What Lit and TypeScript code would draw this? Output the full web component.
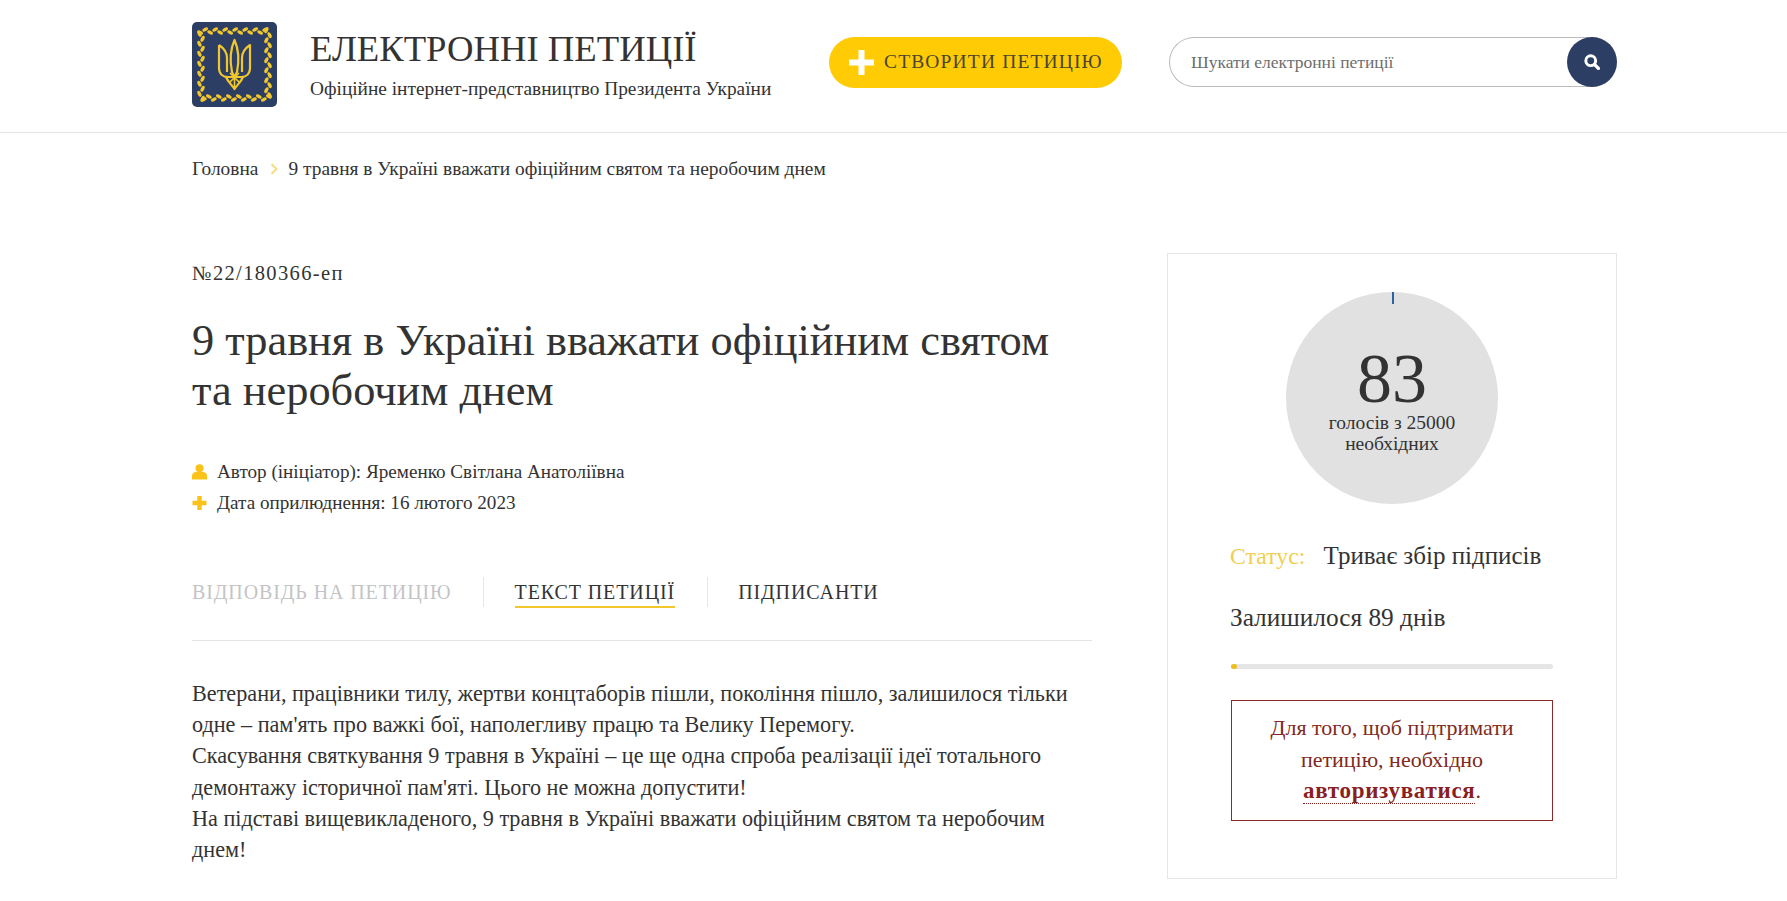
import { LitElement, html, css, svg } from 'lit'
import { customElement } from 'lit/decorators.js'

const GOLD = '#f2c72d'

// leaves of the wreath round the logo, one run per side
function wreath () {
  const leaves = []
  const a = 9
  const b = 76
  const step = 5
  for (let p = a; p < b; p += step) {
    const odd = Math.round((p - a) / step) % 2 === 0 ? 1 : -1
    const sides = [
      [p, a, 0],
      [b, p, 90],
      [b - (p - a), b, 180],
      [a, b - (p - a), 270]
    ]
    for (const [x, y, r] of sides) {
      leaves.push(svg`<ellipse cx="0" cy="${odd * 1.8}" rx="3.200" ry="1.700" fill="${GOLD}" transform="translate(${x} ${y}) rotate(${r + odd * 28})"/>`)
    }
  }
  return leaves
}

const trident = svg`<g fill="none" stroke="${GOLD}" stroke-width="2.200" stroke-linejoin="round">
  <path d="M42.500 18 C38 28 38 40 40 50 L42.500 55 L45 50 C47 40 47 28 42.500 18 Z"/>
  <path d="M27 23 L27 46 C27 52 31 55 36 55 L49 55 C54 55 58 52 58 46 L58 23 C52 27 50 31 50 36 L50 50"/>
  <path d="M27 23 C33 27 35 31 35 36 L35 50"/>
  <path d="M34 55 C36 60 40 63 42.500 67 C45 63 49 60 51 55"/>
  <path d="M42.500 55 L42.500 67 M38 51 L47 60 M47 51 L38 60" stroke-width="1.600"/>
</g>`

@customElement('app-root')
export class AppRoot extends LitElement {
  static styles = css`
    :host {
      display: block;
      height: 901px;
      overflow: hidden;
      background: #fff;
      color: #333;
      font-family: "Liberation Serif", serif;
      font-size: 19.5px;
    }
    a { color: inherit; text-decoration: none; }
    .wrap { width: 1425px; margin-left: 192px; }
    header { height: 132px; border-bottom: 1px solid #e4e4e4; }
    .top { display: flex; align-items: flex-start; height: 100%; }
    .logo { width: 85px; height: 85px; margin-top: 22px; flex: none; display: block; }
    .brand { width: 552px; padding: 26px 0 0 33px; box-sizing: border-box; flex: none; }
    .brand h2 { margin: 0; font-size: 36.7px; font-weight: 400; line-height: 46px; color: #333; white-space: nowrap; }
    .brand p { margin: 5px 0 0; font-size: 19.35px; line-height: 24px; white-space: nowrap; }
    .create {
      display: flex; align-items: center; gap: 10px;
      width: 293px; height: 51px; margin-top: 37px; padding: 0 0 1px 20px; box-sizing: border-box;
      background: #ffcb05; border-radius: 26px; flex: none;
      font-size: 19.5px; letter-spacing: 1.15px; color: #4a4431; white-space: nowrap;
    }
    .search {
      display: flex; align-items: center; justify-content: space-between;
      width: 448px; height: 50px; margin: 37px 0 0 47px; box-sizing: border-box;
      border: 1px solid #bbb; border-radius: 25px; border-right: 0; padding-left: 21px;
      font-size: 17.5px; color: #6d6d6d;
    }
    .search b {
      width: 50px; height: 50px; border-radius: 50%; background: #2c3e63;
      display: flex; align-items: center; justify-content: center; flex: none;
    }
    .crumbs { display: flex; align-items: center; height: 72px; font-size: 19.4px; white-space: nowrap; }
    .crumbs svg { margin: 0 10px 0 12px; }
    .body { display: flex; justify-content: space-between; align-items: flex-start; margin-top: 48px; }
    main { width: 900px; padding-top: 8px; }
    .num { font-size: 20.5px; line-height: 24px; letter-spacing: 1.35px; }
    h1 { margin: 30px 0 0; font-size: 44.4px; font-weight: 400; line-height: 50px; color: #333; white-space: nowrap; }
    .meta { margin-top: 41px; }
    .meta div { display: flex; align-items: center; gap: 10px; height: 31px; font-size: 19.15px; }
    .meta svg { width: 15px; height: 16px; flex: none; }
    .tabs {
      display: flex; align-items: center; margin-top: 57px; height: 34px;
      font-size: 20px; letter-spacing: 0.9px; white-space: nowrap;
    }
    .tabs > span { height: 30px; line-height: 30px; }
    .tabs .off { color: #c4c4c4; padding-right: 31px; border-right: 1px solid #e6e6e6; }
    .tabs .on { margin-left: 31px; position: relative; }
    .tabs .on::after {
      content: ""; position: absolute; left: 0; right: 0; bottom: -1px; height: 2px; background: #f2c72d;
    }
    .tabs i { width: 1px; height: 30px; background: #e6e6e6; margin: 0 30px 0 32px; }
    .text {
      margin-top: 31px; padding-top: 37px; border-top: 1px solid #e4e4e4;
      font-size: 22.2px; line-height: 31.2px; color: #333; white-space: nowrap;
    }
    .text p { margin: 0; }
    aside {
      width: 450px; height: 626px; box-sizing: border-box; border: 1px solid #e6e6e6;
      padding: 38px 63px 0;
    }
    .circle {
      position: relative;
      width: 212px; height: 212px; margin: 0 auto; border-radius: 50%; background: #e1e1e1;
      display: flex; flex-direction: column; align-items: center; padding-top: 54px; box-sizing: border-box;
      text-align: center;
    }
    .circle::before {
      content: ""; position: absolute; top: 0; left: 106px; width: 2px; height: 12px; background: #2d63a5;
    }
    .count { font-size: 70px; line-height: 66px; color: #333; }
    .of { font-size: 19.5px; line-height: 21px; width: 150px; }
    .status { margin: 37px 0 0 -1px; font-size: 25px; line-height: 30px; white-space: nowrap; color: #333; }
    .status span { color: #f0cf4f; margin-right: 12px; font-size: 23.8px; }
    .left { margin: 30px 0 0 -1px; font-size: 25.3px; line-height: 32px; color: #333; }
    .bar { height: 5px; margin-top: 31px; background: #e5e5e5; border-radius: 3px; }
    .bar div { height: 100%; background: #e9c01f; border-radius: 3px; }
    .alert {
      margin-top: 31px; height: 121px; box-sizing: border-box; border: 1px solid #8c2a2a;
      color: #7f2a20; text-align: center; font-size: 22px; line-height: 31.5px; padding-top: 11px;
    }
    .alert a { font-weight: 700; font-size: 23px; letter-spacing: 0.7px; color: #8a1f1f; border-bottom: 1px dotted #8a1f1f; }
  `

  render () {
    const percent = Math.max((83 / 25000) * 100, 2)
    return html`
      <header>
        <div class="wrap top">
          <svg class="logo" viewBox="0 0 85 85">
            <rect width="85" height="85" rx="5" fill="#2c3e63"/>
            ${wreath()}
            ${trident}
          </svg>
          <div class="brand">
            <h2>ЕЛЕКТРОННІ ПЕТИЦІЇ</h2>
            <p>Офіційне інтернет-представництво Президента України</p>
          </div>
          <a class="create">
            <svg width="25" height="25" viewBox="0 0 25 25"><path d="M12.500 0v25M0 12.500h25" stroke="#fff" stroke-width="6"/></svg>
            СТВОРИТИ ПЕТИЦІЮ
          </a>
          <div class="search">
            Шукати електронні петиції
            <b>
              <svg width="16" height="16" viewBox="0 0 15 15"><circle cx="6.300" cy="6.300" r="4.600" fill="none" stroke="#fff" stroke-width="2.800"/><path d="M10 10l3.500 3.500" stroke="#fff" stroke-width="3.200" stroke-linecap="round"/></svg>
            </b>
          </div>
        </div>
      </header>
      <div class="wrap">
        <nav class="crumbs">
          <a>Головна</a>
          <svg width="8" height="12" viewBox="0 0 8 12"><path d="M1.500 1l5 5-5 5" fill="none" stroke="#f7dc7d" stroke-width="2"/></svg>
          <span>9 травня в Україні вважати офіційним святом та неробочим днем</span>
        </nav>
        <div class="body">
          <main>
            <div class="num">№22/180366-еп</div>
            <h1>9 травня в Україні вважати офіційним святом<br>та неробочим днем</h1>
            <div class="meta">
              <div>
                <svg viewBox="0 0 15 16"><circle cx="7.500" cy="4.200" r="4" fill="#fbc31a"/><path d="M0 15.500V12c0-2.500 2-4 4-4h7c2 0 4 1.500 4 4v3.500z" fill="#fbc31a"/></svg>
                Автор (ініціатор): Яременко Світлана Анатоліївна
              </div>
              <div>
                <svg viewBox="0 0 15 16"><path d="M7.500 1v14M.5 8h14" stroke="#fbc31a" stroke-width="4.500"/></svg>
                Дата оприлюднення: 16 лютого 2023
              </div>
            </div>
            <div class="tabs">
              <span class="off">ВІДПОВІДЬ НА ПЕТИЦІЮ</span>
              <span class="on">ТЕКСТ ПЕТИЦІЇ</span>
              <i></i>
              <span>ПІДПИСАНТИ</span>
            </div>
            <div class="text">
              <p>Ветерани, працівники тилу, жертви концтаборів пішли, покоління пішло, залишилося тільки<br>одне – пам'ять про важкі бої, наполегливу працю та Велику Перемогу.</p>
              <p>Скасування святкування 9 травня в Україні – це ще одна спроба реалізації ідеї тотального<br>демонтажу історичної пам'яті. Цього не можна допустити!</p>
              <p>На підставі вищевикладеного, 9 травня в Україні вважати офіційним святом та неробочим<br>днем!</p>
            </div>
          </main>
          <aside>
            <div class="circle">
              <div class="count">83</div>
              <div class="of">голосів з 25000 необхідних</div>
            </div>
            <div class="status"><span>Статус:</span> Триває збір підписів</div>
            <div class="left">Залишилося 89 днів</div>
            <div class="bar"><div style="width:${percent}%"></div></div>
            <div class="alert">Для того, щоб підтримати<br>петицію, необхідно<br><a>авторизуватися</a>.</div>
          </aside>
        </div>
      </div>
    `
  }
}
